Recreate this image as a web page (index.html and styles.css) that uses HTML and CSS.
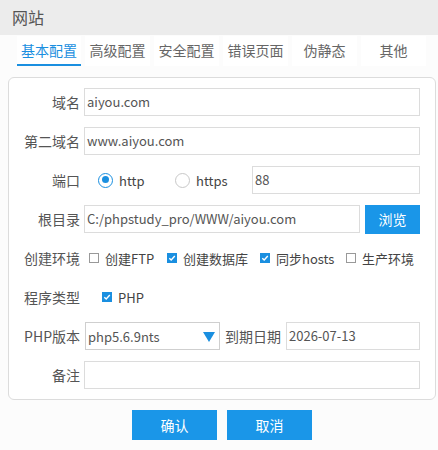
FILE: index.html
```html
<!DOCTYPE html>
<html>
<head>
<meta charset="utf-8">
<link rel="stylesheet" href="styles.css">
</head>
<body>
<div class="titlebar">网站</div>
<div class="tabs">
  <div class="tab active">基本配置</div>
  <div class="tab">高级配置</div>
  <div class="tab">安全配置</div>
  <div class="tab">错误页面</div>
  <div class="tab">伪静态</div>
  <div class="tab">其他</div>
</div>
<div class="panel">
  <div class="row">
    <div class="label">域名</div>
    <div class="input grow">aiyou.com</div>
  </div>
  <div class="row">
    <div class="label">第二域名</div>
    <div class="input grow">www.aiyou.com</div>
  </div>
  <div class="row">
    <div class="label">端口</div>
    <div class="radios">
      <span class="radio on"></span><span class="opt-text http">http</span>
      <span class="radio"></span><span class="opt-text https">https</span>
    </div>
    <div class="input grow">88</div>
  </div>
  <div class="row">
    <div class="label">根目录</div>
    <div class="input grow">C:/phpstudy_pro/WWW/aiyou.com</div>
    <div class="btn-browse">浏览</div>
  </div>
  <div class="row">
    <div class="label">创建环境</div>
    <div class="checks">
      <span class="check-item w1"><span class="box"></span><span class="opt-text">创建FTP</span></span>
      <span class="check-item w2"><span class="box on"><svg viewBox="0 0 10 10" width="10" height="10"><path d="M2.3 5.2 L4.2 7 L7.8 3" fill="none" stroke="#fff" stroke-width="1.4"/></svg></span><span class="opt-text">创建数据库</span></span>
      <span class="check-item w3"><span class="box on"><svg viewBox="0 0 10 10" width="10" height="10"><path d="M2.3 5.2 L4.2 7 L7.8 3" fill="none" stroke="#fff" stroke-width="1.4"/></svg></span><span class="opt-text">同步hosts</span></span>
      <span class="check-item"><span class="box"></span><span class="opt-text">生产环境</span></span>
    </div>
  </div>
  <div class="row">
    <div class="label">程序类型</div>
    <div class="checks php">
      <span class="check-item"><span class="box on"><svg viewBox="0 0 10 10" width="10" height="10"><path d="M2.3 5.2 L4.2 7 L7.8 3" fill="none" stroke="#fff" stroke-width="1.4"/></svg></span><span class="opt-text">PHP</span></span>
    </div>
  </div>
  <div class="row">
    <div class="label">PHP版本</div>
    <div class="select">
      <span>php5.6.9nts</span>
      <svg class="arrow" viewBox="0 0 12 12" width="12" height="12"><path d="M0 1 L12 1 L6 11 Z" fill="#1a8fe0"/></svg>
    </div>
    <div class="label2">到期日期</div>
    <div class="input grow">2026-07-13</div>
  </div>
  <div class="row">
    <div class="label">备注</div>
    <div class="input grow"></div>
  </div>
</div>
<div class="actions">
  <div class="btn">确认</div>
  <div class="btn">取消</div>
</div>
</body>
</html>
```
FILE: styles.css
```css
* { box-sizing: border-box; }
body {
  margin: 0;
  background: #fcfcfc;
  font-family: "Noto Sans CJK SC", "Noto Sans", sans-serif;
  color: #555;
  width: 438px;
  height: 450px;
  overflow: hidden;
}
.titlebar {
  height: 35px;
  background: #ececec;
  font-size: 16px;
  line-height: 35px;
  padding-left: 12px;
  color: #555;
}
.tabs {
  display: flex;
  gap: 4px;
  padding-left: 17px;
  margin-top: 1px;
  height: 30px;
}
.tab {
  width: 65px;
  height: 30px;
  background: #fff;
  font-size: 14px;
  line-height: 29px;
  text-align: center;
  color: #666;
}
.tab.active {
  color: #1a8fe0;
  border-bottom: 2px solid #1a8fe0;
  width: 64px;
}
.panel {
  margin: 11px 0 0 8px;
  width: 428px;
  border: 1px solid #dcdcdc;
  border-radius: 6px;
  background: #fff;
  padding: 10px 15px 10px 0;
  display: flex;
  flex-direction: column;
  gap: 11px;
}
.row {
  display: flex;
  align-items: center;
  height: 28px;
}
.label {
  width: 71px;
  flex: none;
  text-align: right;
  font-size: 14px;
  margin-right: 4px;
  color: #555;
  white-space: nowrap;
}
.input {
  height: 28px;
  border: 1px solid #dcdcdc;
  background: #fff;
  font-size: 13px;
  line-height: 26px;
  padding-left: 2px;
  color: #555;
  white-space: nowrap;
  overflow: hidden;
}
.grow { flex: 1; min-width: 0; }
.radios {
  display: flex;
  align-items: center;
  margin-left: 14px;
  width: 154px;
  flex: none;
}
.radio {
  width: 15px;
  height: 15px;
  border-radius: 50%;
  border: 1px solid #c8c8c8;
  flex: none;
  position: relative;
}
.radio.on {
  border: 1.5px solid #1a8fe0;
}
.radio.on::after {
  content: "";
  position: absolute;
  left: 2.5px;
  top: 2.5px;
  width: 7px;
  height: 7px;
  border-radius: 50%;
  background: #1a8fe0;
}
.opt-text {
  font-size: 13px;
  color: #444;
  margin-left: 6px;
  white-space: nowrap;
}
.http { width: 56px; }
.btn-browse {
  width: 55px;
  height: 29px;
  margin-left: 5px;
  background: #1a96e8;
  color: #fff;
  font-size: 14px;
  line-height: 29px;
  text-align: center;
  flex: none;
}
.checks {
  display: flex;
  align-items: center;
  margin-left: 5px;
}
.checks.php { margin-left: 18px; }
.check-item {
  display: flex;
  align-items: center;
  flex: none;
}
.check-item.w1 { width: 78px; }
.check-item.w2 { width: 93px; }
.check-item.w3 { width: 86px; }
.box {
  width: 10px;
  height: 10px;
  border: 1px solid #999;
  flex: none;
  display: flex;
}
.box.on {
  border: none;
  background: #1a8fe0;
}
.select {
  width: 135px;
  height: 28px;
  margin-left: 1px;
  border: 1px solid #cfcfcf;
  background: #fff;
  display: flex;
  align-items: center;
  justify-content: space-between;
  padding: 0 4px 0 2px;
  font-size: 13px;
  color: #555;
  flex: none;
}
.arrow { margin-top: 1px; }
.label2 {
  font-size: 14px;
  margin: 0 5px;
  white-space: nowrap;
  color: #555;
}
.actions {
  display: flex;
  justify-content: center;
  gap: 10px;
  padding-left: 6px;
  margin-top: 10px;
}
.btn {
  width: 85px;
  height: 30px;
  background: #1a96e8;
  color: #fff;
  font-size: 14px;
  line-height: 30px;
  text-align: center;
}
```
